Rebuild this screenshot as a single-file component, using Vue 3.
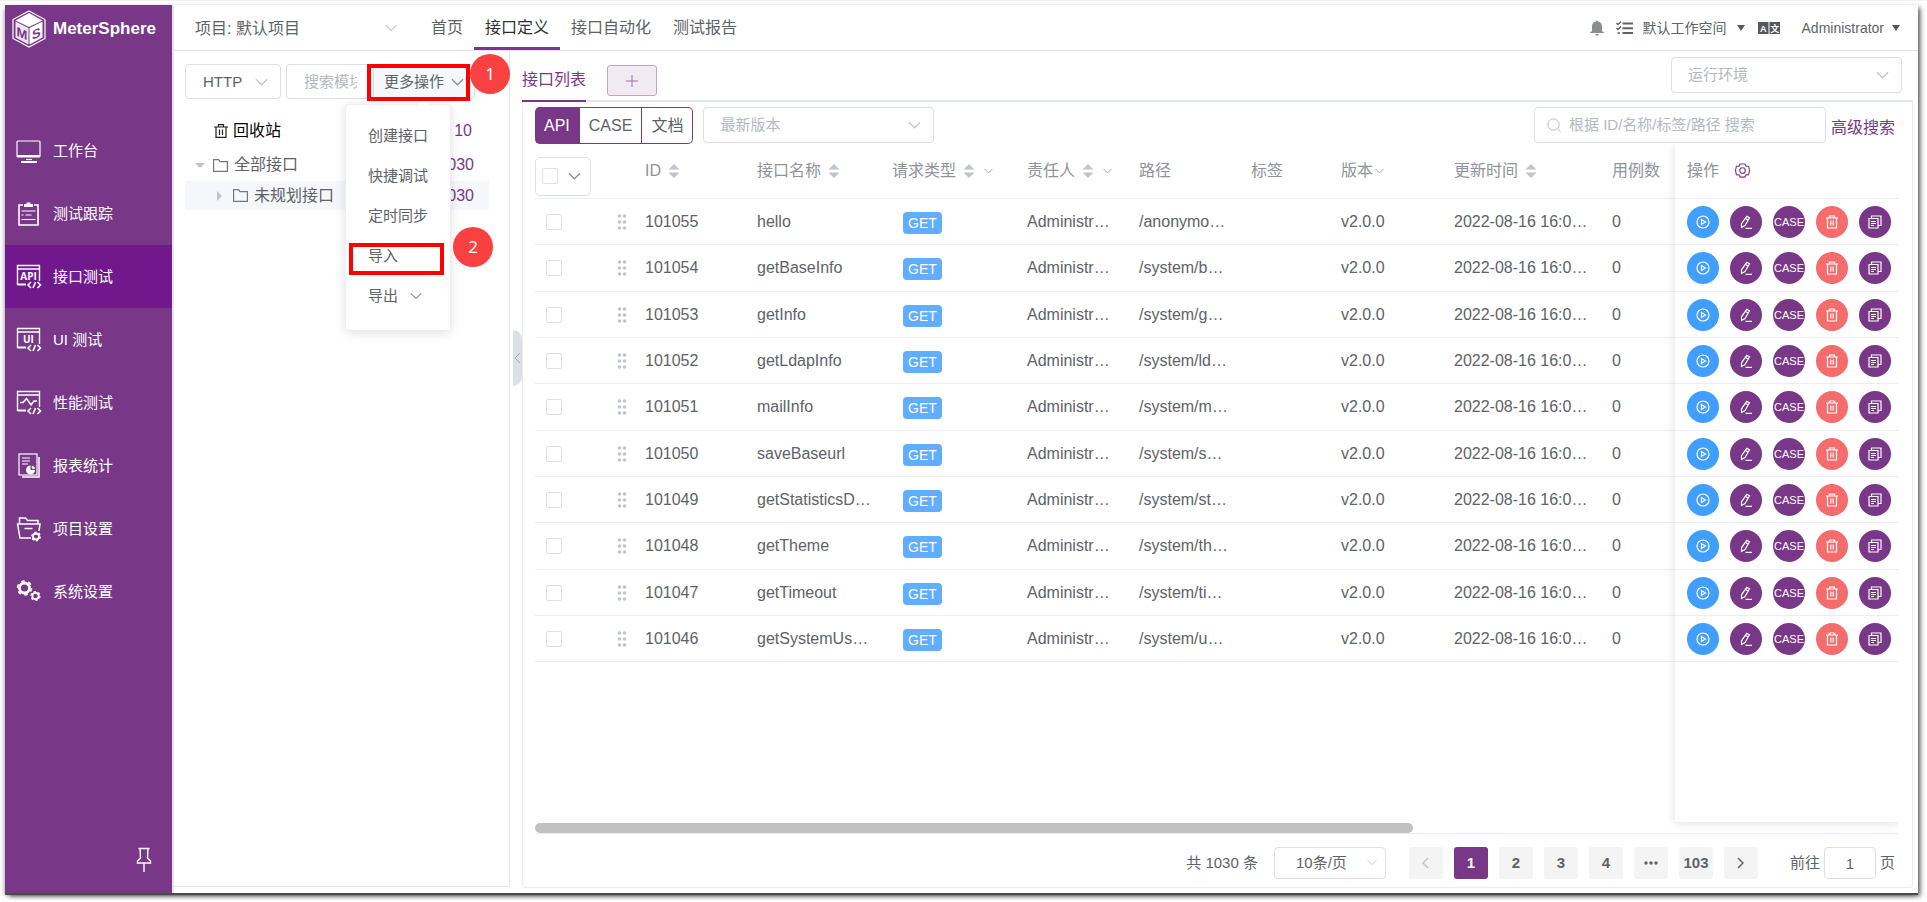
<script setup>
import { ref } from 'vue'

const menu = [
  { icon: 'desktop', label: '工作台' },
  { icon: 'clipboard', label: '测试跟踪' },
  { icon: 'api', label: '接口测试', active: true },
  { icon: 'ui', label: 'UI 测试' },
  { icon: 'perf', label: '性能测试' },
  { icon: 'report', label: '报表统计' },
  { icon: 'folder', label: '项目设置' },
  { icon: 'gears', label: '系统设置' },
]

const nav = [
  { label: '首页' },
  { label: '接口定义', active: true },
  { label: '接口自动化' },
  { label: '测试报告' },
]

const columns = [
  { key: 'id', label: 'ID', sort: true },
  { key: 'name', label: '接口名称', sort: true },
  { key: 'method', label: '请求类型', sort: true, filter: true },
  { key: 'owner', label: '责任人', sort: true, filter: true },
  { key: 'path', label: '路径' },
  { key: 'tags', label: '标签' },
  { key: 'version', label: '版本', filter: true, tight: true },
  { key: 'updated', label: '更新时间', sort: true },
  { key: 'cases', label: '用例数' },
]

const rows = [
  ['101055', 'hello', '/anonymo…'],
  ['101054', 'getBaseInfo', '/system/b…'],
  ['101053', 'getInfo', '/system/g…'],
  ['101052', 'getLdapInfo', '/system/ld…'],
  ['101051', 'mailInfo', '/system/m…'],
  ['101050', 'saveBaseurl', '/system/s…'],
  ['101049', 'getStatisticsD…', '/system/st…'],
  ['101048', 'getTheme', '/system/th…'],
  ['101047', 'getTimeout', '/system/ti…'],
  ['101046', 'getSystemUs…', '/system/u…'],
].map(([id, name, path]) => ({
  id,
  name,
  path,
  owner: 'Administr…',
  version: 'v2.0.0',
  updated: '2022-08-16 16:0…',
  cases: '0',
}))

const view = ref('API')
const page = ref(1)
const pages = [1, 2, 3, 4]
</script>

<template>
  <div class="shell">
    <aside class="sidebar">
      <a class="brand" href="#">
        <svg class="logo" viewBox="0 0 34 38" width="34" height="38">
          <path d="M17 1 33 9.500V28.500L17 37 1 28.500V9.500Z" fill="none" stroke="#fff" stroke-width="1.200" />
          <path d="M17 3 30.500 10.500 17 17 3.500 10.500Z" fill="#fff" />
          <path d="M3.500 11.500 16.500 18V34.500L3.500 27.500Z" fill="#efe6f2" />
          <path d="M30.500 11.500 17.500 18V34.500L30.500 27.500Z" fill="#fff" />
          <text transform="matrix(1 .45 0 1 4.500 25.500)" class="cube-letter">M</text>
          <text transform="matrix(1 -.45 0 1 20 30)" class="cube-letter">S</text>
        </svg>
        <span>MeterSphere</span>
      </a>
      <nav class="menu">
        <a v-for="m in menu" :key="m.label" href="#" class="menu-item" :class="{ active: m.active }">
          <svg class="menu-icon" viewBox="0 0 26 26" width="26" height="26">
            <g v-if="m.icon === 'desktop'">
              <rect x="1" y="3" width="23" height="16" rx="1" />
              <path d="M1 18h23M5 24h16" stroke-width="2" /><path d="M10 21.500h6" />
            </g>
            <g v-else-if="m.icon === 'clipboard'">
              <path d="M7 4H3v20h19V4h-4" stroke-width="1.600" />
              <path class="solid" d="M8 6V3h2.500V1.500h4V3H17v3Z" />
              <path d="M5.500 10h14M5.500 14h2M9.500 14h6M5.500 18.500h14" />
            </g>
            <g v-else-if="m.icon === 'report'">
              <rect x="3" y="1" width="18" height="21" />
              <path d="M23 4v20H6" stroke-width="1.500" />
              <path d="M6 5h8M6 8h8M6 11h6" />
              <path class="solid" d="M14.500 12.500V17h4.500a4.500 4.500 0 1 1-4.500-4.500Z" />
              <path class="solid" d="M15.800 12.500a4 4 0 0 1 3.400 3.300h-3.400Z" />
            </g>
            <g v-else-if="m.icon === 'folder'">
              <path d="M3.500 8V2h6l2 2.500h10.500V8M15 22H4L1.500 8H24l-1 7" stroke-width="1.500" />
              <path d="M8.500 12.500h8" stroke-width="1.500" />
              <circle cx="20" cy="20.500" r="3" stroke-width="1.800" />
              <circle cx="20" cy="20.500" r="4.200" stroke-width="1.400" stroke-dasharray="2.200 2.200" />
            </g>
            <g v-else-if="m.icon === 'gears'">
              <circle cx="8.500" cy="9" r="5" stroke-width="2.800" />
              <circle cx="8.500" cy="9" r="7" stroke-width="1.600" stroke-dasharray="3.700 3.630" />
              <circle cx="19.500" cy="17" r="3.200" stroke-width="1.800" />
              <circle cx="19.500" cy="17" r="4.500" stroke-width="1.200" stroke-dasharray="2.350 2.350" />
            </g>
            <g v-else>
              <path d="M1.500 21V1.500h22V17M1.500 5h22" stroke-width="1.400" />
              <path d="M1.500 20.500h8.500" stroke-width="2" />
              <path d="m15 18-3 3 3 3M21.500 18l3 3-3 3M19.500 18l-2.500 6" stroke-width="1.600" />
              <path v-if="m.icon === 'perf'" d="M4 12.500h3l3.500-4L15 15l3-4h3" stroke-width="1.600" />
              <text v-else x="12.500" y="16" text-anchor="middle">{{ m.icon === 'api' ? 'API' : 'UI' }}</text>
            </g>
          </svg>
          <span>{{ m.label }}</span>
        </a>
      </nav>
      <button class="pin" type="button" aria-label="固定菜单">
        <svg viewBox="0 0 16 26" width="16" height="26">
          <path d="M2.500 1.500h11M4 1.500 4.500 11 1.500 14v2h13v-2l-3-3L12 1.500M8 16v9" fill="none" stroke="#fff" stroke-width="1.400" />
        </svg>
      </button>
    </aside>

    <div class="main">
      <header class="topbar">
        <div class="select project">
          <select aria-label="项目"><option>项目: 默认项目</option></select>
          <svg class="chev" viewBox="0 0 14 8" width="12" height="8"><path d="m1 1 6 6 6-6" /></svg>
        </div>
        <nav class="topnav">
          <a v-for="n in nav" :key="n.label" href="#" :class="{ active: n.active }">{{ n.label }}</a>
        </nav>
        <div class="user-tools">
          <button type="button" aria-label="通知">
            <svg viewBox="0 0 14 16" width="14" height="16"><path d="M6 1.500a1 1 0 0 1 2 0c3 .5 4 2.500 4 5V11l2 1.500v.5H0v-.5L2 11V6.500c0-2.500 1-4.500 4-5ZM5 14h4c0 2-4 2-4 0Z" fill="#8b8d92" /></svg>
          </button>
          <button type="button" aria-label="任务" class="tasks">
            <svg viewBox="0 0 17 14" width="17" height="14" fill="none" stroke="#606266" stroke-width="2">
              <path d="M6.500 2.500H17M6.500 7.200H17M6.500 12H17" /><path d="m.5 2 1.500 1.500L5 .5M.5 7l1.500 1.500L5 5.500M1.500 12h2.500" stroke-width="1.400" />
            </svg>
          </button>
          <button type="button" class="workspace">默认工作空间<i class="caret"></i></button>
          <button type="button" aria-label="语言" class="lang">
            <svg viewBox="0 0 22 12" width="22" height="12">
              <path d="M0 0h10.500v12H0ZM11.500 0H22v12H11.500Z" fill="#55585d" />
              <text x="5.200" y="10" text-anchor="middle" class="lang-a">A</text>
              <text x="16.800" y="9.500" text-anchor="middle" class="lang-a">文</text>
            </svg>
          </button>
          <button type="button" class="account">Administrator<i class="caret"></i></button>
        </div>
      </header>

      <div class="content">
        <section class="modules">
          <div class="module-tools">
            <div class="select protocol">
              <select aria-label="协议"><option>HTTP</option></select>
              <svg class="chev" viewBox="0 0 14 8" width="13" height="8"><path d="m1 1 6 6 6-6" /></svg>
            </div>
            <input class="module-search" type="text" placeholder="搜索模块" aria-label="搜索模块" />
            <div class="more">
              <button class="more-btn" type="button">更多操作
                <svg class="chev dark" viewBox="0 0 14 8" width="13" height="8"><path d="m1 1 6 6 6-6" /></svg>
              </button>
              <span class="mark mark-more"></span>
              <span class="step step-one">1</span>
              <ul class="dropdown">
                <li><button type="button">创建接口</button></li>
                <li><button type="button">快捷调试</button></li>
                <li><button type="button">定时同步</button></li>
                <li>
                  <button type="button">导入</button>
                  <span class="mark mark-import"></span>
                  <span class="step step-two">2</span>
                </li>
                <li>
                  <button type="button">导出
                    <svg class="chev dark" viewBox="0 0 14 8" width="12" height="8"><path d="m1 1 6 6 6-6" /></svg>
                  </button>
                </li>
              </ul>
            </div>
          </div>
          <div class="tree">
            <a class="node recycle" href="#">
              <svg viewBox="0 0 14 14" width="14" height="14" class="line-icon black"><path d="M0 3h14M4.500 3V.7h5V3M2 3v10.300h10V3M5.500 5.500v5.500M8.500 5.500v5.500" /></svg>
              <span class="label">回收站</span><span class="count">10</span>
            </a>
            <a class="node root" href="#">
              <i class="tri down"></i>
              <svg viewBox="0 0 15 13" width="15" height="13" class="line-icon"><path d="M.6 12.400V.6h5L7 2.600h7.400v9.800Z" /></svg>
              <span class="label">全部接口</span><span class="count">1030</span>
            </a>
            <a class="node child" href="#">
              <i class="tri right"></i>
              <svg viewBox="0 0 15 13" width="15" height="13" class="line-icon"><path d="M.6 12.400V.6h5L7 2.600h7.400v9.800Z" /></svg>
              <span class="label">未规划接口</span><span class="count">1030</span>
            </a>
          </div>
          <button class="collapse" type="button" aria-label="收起">
            <svg viewBox="0 0 7 12" width="7" height="12"><path d="M6 1 1 6l5 5" fill="none" stroke="#a9adb3" stroke-width="1" /></svg>
          </button>
        </section>

        <section class="workarea">
          <div class="tabs">
            <a class="tab" href="#">接口列表</a>
            <button class="add" type="button" aria-label="新增标签">
              <svg viewBox="0 0 12 12" width="12" height="12"><path d="M6 0v12M0 6h12" stroke="#9a75a6" /></svg>
            </button>
            <div class="select env">
              <select aria-label="运行环境" class="empty"><option>运行环境</option></select>
              <svg class="chev" viewBox="0 0 14 8" width="13" height="8"><path d="m1 1 6 6 6-6" /></svg>
            </div>
          </div>
          <div class="panel">
            <div class="toolbar">
              <div class="switch">
                <button v-for="v in ['API', 'CASE', '文档']" :key="v" type="button" :class="{ on: view === v }" @click="view = v">{{ v }}</button>
              </div>
              <div class="select version">
                <select aria-label="版本" class="empty"><option>最新版本</option></select>
                <svg class="chev" viewBox="0 0 14 8" width="13" height="8"><path d="m1 1 6 6 6-6" /></svg>
              </div>
              <label class="search">
                <svg viewBox="0 0 15 15" width="14" height="14" fill="none" stroke="#b4b8bf"><circle cx="7" cy="7" r="6" /><path d="m11.500 11.500 3 3" /></svg>
                <input type="text" placeholder="根据 ID/名称/标签/路径 搜索" aria-label="搜索" />
              </label>
              <a class="advanced" href="#">高级搜索</a>
            </div>

            <div class="grid">
              <table class="list">
                <colgroup>
                  <col class="c-check" /><col class="c-drag" /><col v-for="c in columns" :key="c.key" :class="'c-' + c.key" />
                </colgroup>
                <thead>
                  <tr>
                    <th class="check">
                      <span class="check-all">
                        <input type="checkbox" aria-label="全选" />
                        <svg class="chev dark" viewBox="0 0 14 8" width="13" height="8"><path d="m1 1 6 6 6-6" /></svg>
                      </span>
                    </th>
                    <th></th>
                    <th v-for="c in columns" :key="c.key">
                      <span class="head" :class="{ tight: c.tight }">{{ c.label }}
                        <svg v-if="c.sort" class="sort" viewBox="0 0 12 16" width="12" height="16"><path d="M.5 6.500 6 1l5.500 5.500ZM.5 9.500h11L6 15Z" /></svg>
                        <svg v-if="c.filter" class="chev" viewBox="0 0 14 8" width="9" height="6"><path d="m1 1 6 6 6-6" /></svg>
                      </span>
                    </th>
                  </tr>
                </thead>
                <tbody>
                  <tr v-for="r in rows" :key="r.id">
                    <td class="check"><input type="checkbox" :aria-label="r.id" /></td>
                    <td class="drag">
                      <svg viewBox="0 0 10 16" width="10" height="16" fill="#c0c4cc"><circle v-for="n in 6" :key="n" :cx="n % 2 ? 2.5 : 7.5" :cy="Math.ceil(n / 2) * 6 - 4" r="1.800" /></svg>
                    </td>
                    <td v-for="c in columns" :key="c.key">
                      <span v-if="c.key === 'method'" class="tag">GET</span>
                      <template v-else>{{ r[c.key] }}</template>
                    </td>
                  </tr>
                </tbody>
              </table>
              <div class="fixed">
                <table>
                  <thead>
                    <tr>
                      <th>
                        <span class="head ops-head">操作
                          <svg viewBox="0 0 16 16" width="15" height="15" fill="none" stroke="#783887" stroke-width="1.200">
                            <path d="M5.500 1h5l1.300 2.300 2.700.2L15.500 8l-1 4.500-2.700.2-1.300 2.300h-5l-1.300-2.300-2.700-.2L.5 8l1-4.500 2.700-.2Z" /><circle cx="8" cy="8" r="3" />
                          </svg>
                        </span>
                      </th>
                    </tr>
                  </thead>
                  <tbody>
                    <tr v-for="r in rows" :key="r.id">
                      <td>
                        <div class="ops">
                          <button type="button" class="blue" aria-label="运行">
                            <svg viewBox="0 0 14 14" width="14" height="14"><circle cx="7" cy="7" r="6" /><path d="M5.500 4.500v5L9.500 7Z" /></svg>
                          </button>
                          <button type="button" aria-label="编辑">
                            <svg viewBox="0 0 14 14" width="14" height="14"><path d="M7.800 1.200 10.500 2.800 6 10.500 2.500 12.500V8.800ZM6.500 3.500l2.700 1.600M6.500 13.300H13" /></svg>
                          </button>
                          <button type="button">CASE</button>
                          <button type="button" class="red" aria-label="删除">
                            <svg viewBox="0 0 14 14" width="14" height="14"><path d="M1 3h12M4.500 3V1h5v2M2.500 3v10h9V3M5.800 5.500v5M8.200 5.500v5" /></svg>
                          </button>
                          <button type="button" aria-label="复制">
                            <svg viewBox="0 0 14 14" width="14" height="14"><path d="M1 3.500h9V13H1ZM3.500 3.500V1H13v9.500h-3M3 6.500h5M3 8.500h5M3 10.500h3" /></svg>
                          </button>
                        </div>
                      </td>
                    </tr>
                  </tbody>
                </table>
              </div>
            </div>
            <div class="scroll"><div class="thumb"></div></div>

            <div class="pager">
              <span>共 1030 条</span>
              <div class="select size">
                <select aria-label="每页条数"><option>10条/页</option></select>
                <svg class="chev" viewBox="0 0 14 8" width="10" height="7"><path d="m1 1 6 6 6-6" /></svg>
              </div>
              <div class="pages">
                <button type="button" aria-label="上一页"><svg viewBox="0 0 7 12" width="7" height="12"><path d="M6 1 1 6l5 5" fill="none" stroke="#c0c4cc" stroke-width="1.500" /></svg></button>
                <button v-for="p in pages" :key="p" type="button" :class="{ on: page === p }" @click="page = p">{{ p }}</button>
                <button type="button" aria-label="更多"><svg viewBox="0 0 14 4" width="14" height="4" fill="#606266"><circle cx="2" cy="2" r="1.700" /><circle cx="7" cy="2" r="1.700" /><circle cx="12" cy="2" r="1.700" /></svg></button>
                <button type="button">103</button>
                <button type="button" aria-label="下一页"><svg viewBox="0 0 7 12" width="7" height="12"><path d="m1 1 5 5-5 5" fill="none" stroke="#606266" stroke-width="1.500" /></svg></button>
              </div>
              <label class="jump">前往<input type="text" value="1" />页</label>
            </div>
          </div>
        </section>
      </div>
    </div>
  </div>
</template>

<style>
body {
  background: #fff;
  border-top: 1px solid #f0f0f0;
}
</style>

<style scoped>
.shell,
.shell * {
  box-sizing: border-box;
}
.shell {
  display: flex;
  min-height: calc(100vh - 12px);
  margin: 4px 9px 7px 5px;
  border-bottom: 2px solid #4a4a4a;
  box-shadow: 3px 2px 5px -1px rgba(0, 0, 0, 0.7), -3px 2px 4px -2px rgba(0, 0, 0, 0.3);
  background: #fff;
  color: #606266;
  font: 16px/24px "Liberation Sans", "Noto Sans CJK SC", sans-serif;
}
a {
  color: inherit;
  text-decoration: none;
}
button,
input,
select {
  font: inherit;
  color: inherit;
}
button {
  padding: 0;
  border: 0;
  background: none;
  cursor: pointer;
}
svg {
  display: block;
  flex: none;
}
.chev {
  fill: none;
  stroke: #c0c4cc;
  stroke-width: 1.3;
}
.chev.dark {
  stroke: #8a8d93;
}

.sidebar {
  display: flex;
  flex-direction: column;
  flex: none;
  width: 167px;
  background: #783887;
  color: #fff;
}
.brand {
  display: flex;
  align-items: center;
  gap: 7px;
  height: 48px;
  padding-left: 7px;
  font-size: 17px;
  font-weight: 700;
}
.cube-letter {
  fill: #783887;
  font: 700 13px "Liberation Sans", sans-serif;
}
.menu {
  margin-top: 66px;
}
.menu-item {
  display: flex;
  align-items: center;
  gap: 11px;
  height: 63px;
  padding-left: 11px;
  font-size: 15px;
}
.menu-item.active {
  background: #71198c;
}
.menu-icon {
  fill: none;
  stroke: #fff;
  stroke-width: 1.2;
}
.menu-icon .solid {
  fill: #fff;
  stroke: none;
}
.menu-icon text {
  fill: #fff;
  stroke: none;
  font: 700 10px "Open Sans", sans-serif;
}
.pin {
  align-self: flex-end;
  margin: auto 20px 20px 0;
}

.main {
  display: flex;
  flex-direction: column;
  flex: 1;
  min-width: 0;
  border-left: 2px solid #e6e6ea;
}
.topbar {
  display: flex;
  align-items: stretch;
  height: 46px;
  border-bottom: 1px solid #e2e2e4;
}
.select {
  position: relative;
  display: flex;
}
.select select {
  width: 100%;
  appearance: none;
  border: 1px solid #dcdfe6;
  border-radius: 4px;
  background: #fff;
  padding: 0 16px;
  font-size: 15px;
}
.select select.empty {
  color: #b4b8c0;
}
.select .chev {
  position: absolute;
  right: 13px;
  top: 50%;
  margin-top: -4px;
  pointer-events: none;
}
.project {
  width: 235px;
}
.project select {
  border: 0;
  padding: 2px 21px 0;
  font-size: 16px;
}
.project .chev {
  right: 12px;
}
.topnav {
  display: flex;
}
.topnav a {
  padding: 11px 11px 0;
  border-bottom: 3px solid transparent;
}
.topnav a:first-child {
  margin-left: 11px;
}
.topnav a.active {
  color: #303133;
  border-color: #783887;
}
.user-tools {
  display: flex;
  align-items: center;
  margin-left: auto;
  padding: 0 18px 0 0;
  font-size: 14px;
}
.tasks {
  margin: 0 10px 0 12px;
}
.workspace,
.account {
  display: flex;
  align-items: center;
  gap: 10px;
}
.lang {
  margin: 0 22px 0 13px;
}
.account {
  gap: 8px;
}
.lang-a {
  fill: #fff;
  font: 700 9px "Liberation Sans", "Noto Sans CJK SC", sans-serif;
}
.caret {
  border: 4px solid transparent;
  border-top: 6px solid #55585d;
  border-bottom: 0;
}

.content {
  display: flex;
  flex: 1;
}
.modules {
  position: relative;
  flex: none;
  width: 336px;
  margin-bottom: 6px;
  border: solid #e6e6e8;
  border-width: 0 1px 1px 0;
}
.module-tools {
  display: flex;
  height: 48px;
  padding: 13px 0 0 11px;
}
.protocol {
  width: 96px;
  margin-right: 5px;
}
.protocol select {
  padding: 0 17px;
}
.module-search {
  width: 87px;
  min-width: 0;
  padding: 0 16px 0 17px;
  border: 1px solid #dcdfe6;
  border-right: 0;
  border-radius: 4px 0 0 4px;
  font-size: 15px;
}
::placeholder {
  color: #b4b8c0;
  opacity: 1;
}
.more {
  position: relative;
}
.more-btn {
  display: flex;
  align-items: center;
  gap: 7px;
  width: 102px;
  height: 35px;
  padding-left: 10px;
  border: 1px solid #dcdfe6;
  border-radius: 0 4px 4px 0;
  background: #f5f7fa;
  font-size: 15px;
}
.mark {
  position: absolute;
  z-index: 3;
  border: 4px solid #fe0000;
  pointer-events: none;
}
.mark-more {
  left: -6px;
  top: 0;
  width: 103px;
  height: 37px;
}
.step {
  position: absolute;
  z-index: 3;
  width: 40px;
  border-radius: 50%;
  background: #fa4141;
  color: #fff;
  font: 17px/40px "Noto Sans", sans-serif;
  text-align: center;
}
.step-one {
  left: 97px;
  top: -10px;
}
.dropdown {
  position: absolute;
  z-index: 2;
  left: -28px;
  top: 40px;
  width: 106px;
  margin: 0;
  padding: 11px 0 14px;
  border: 1px solid #ebeef5;
  border-radius: 4px;
  background: #fff;
  box-shadow: 0 2px 12px rgba(0, 0, 0, 0.12);
  list-style: none;
}
.dropdown::before {
  content: "";
  position: absolute;
  left: 73px;
  top: -5px;
  width: 9px;
  height: 9px;
  background: #fff;
  transform: rotate(45deg);
}
.dropdown li {
  position: relative;
}
.dropdown button {
  display: flex;
  align-items: center;
  gap: 12px;
  width: 100%;
  height: 40px;
  padding-left: 22px;
  font-size: 15px;
}
.mark-import {
  left: 3px;
  top: 7px;
  width: 95px;
  height: 32px;
}
.step-two {
  left: 107px;
  top: -9px;
}
.tree {
  padding: 14px 20px 0 11px;
}
.node {
  display: flex;
  align-items: center;
  height: 29px;
}
.node .label {
  margin-left: 6px;
}
.node .count {
  margin-left: auto;
  padding-right: 15px;
  color: #783887;
}
.node.recycle {
  height: 36px;
  padding-left: 29px;
  color: #000;
}
.recycle .label {
  margin-left: 5px;
}
.recycle .count {
  padding-right: 17px;
}
.node.root {
  height: 32px;
  padding-left: 10px;
}
.child {
  padding-left: 32px;
  background: #f5f7fa;
}
.line-icon {
  fill: none;
  stroke: #75777c;
  stroke-width: 1.2;
}
.line-icon.black {
  stroke: #222;
}
.tri {
  border: 5px solid transparent;
}
.tri.down {
  border-top-color: #c0c4cc;
  margin: 5px 8px 0 0;
}
.tri.right {
  border-left-color: #c0c4cc;
  margin-right: 6px;
}
.collapse {
  position: absolute;
  left: 339px;
  top: 279px;
  width: 9px;
  height: 56px;
  padding-left: 1px;
  border-radius: 0 9px 9px 0;
  background: #dcdfe3;
}

.workarea {
  display: flex;
  flex-direction: column;
  flex: 1;
  min-width: 0;
  margin: 0 5px 5px 12px;
}
.tabs {
  display: flex;
  align-items: center;
  height: 51px;
  border-bottom: 2px solid #e4e7ed;
}
.tab {
  align-self: stretch;
  margin-bottom: -2px;
  padding-top: 17px;
  border-bottom: 2px solid #783887;
  color: #783887;
}
.add {
  display: grid;
  place-items: center;
  width: 50px;
  height: 31px;
  margin: 10px 0 0 21px;
  border: 1px solid #c2a4ca;
  border-radius: 3px;
  background: #f1eaf3;
}
.env {
  width: 231px;
  height: 36px;
  margin: 0 11px 2px auto;
}
.panel {
  display: flex;
  flex-direction: column;
  flex: 1;
  padding: 5px 13px 8px 12px;
  border: 1px solid #ebecf3;
  border-top: 0;
  border-radius: 0 0 4px 4px;
}
.toolbar {
  display: flex;
  height: 37px;
}
.switch {
  display: flex;
  margin-right: 10px;
}
.switch button {
  padding: 0 9px;
  border: 1px solid #783887;
  border-left-width: 0;
}
.switch button:first-child {
  border-radius: 5px 0 0 5px;
}
.switch button:last-child {
  border-radius: 0 5px 5px 0;
}
.switch .on {
  background: #783887;
  color: #fff;
}
.version {
  width: 231px;
  height: 36px;
}
.search {
  display: flex;
  align-items: center;
  gap: 8px;
  width: 292px;
  height: 36px;
  margin-left: auto;
  padding-left: 12px;
  border: 1px solid #dcdfe6;
  border-radius: 4px;
  font-size: 15px;
}
.search input {
  width: 100%;
  border: 0;
  padding: 0;
  outline: 0;
  background: none;
}
.advanced {
  padding: 9px 4px 0 5px;
  color: #783887;
}

.grid {
  display: flex;
  flex: 1;
  margin-top: 1px;
}
.grid table {
  width: 100%;
  border-collapse: separate;
  border-spacing: 0;
  table-layout: fixed;
}
.grid .list {
  flex: 1;
  align-self: flex-start;
  min-width: 0;
}
.c-check { width: 74px; }
.c-drag { width: 24px; }
.c-id, .c-owner, .c-path { width: 112px; }
.c-name, .c-method { width: 135px; }
.c-tags { width: 90px; }
.c-version { width: 113px; }
.c-updated { width: 158px; }
.grid th,
.grid td {
  padding: 0 0 0 12px;
  border-bottom: 1px solid #ebeef5;
  text-align: left;
  white-space: nowrap;
}
.grid th {
  height: 54px;
  padding-bottom: 2px;
  color: #909399;
  font-weight: 400;
}
.grid td {
  height: 46px;
}
.grid tbody tr:nth-child(3n + 2) td {
  height: 47px;
}
.grid .check {
  padding-left: 11px;
}
.grid th.check {
  padding: 9px 0 0;
}
.grid .drag {
  padding-left: 8px;
}
input[type="checkbox"] {
  display: block;
  appearance: none;
  width: 16px;
  height: 16px;
  margin: 0;
  border: 1px solid #dcdfe6;
  border-radius: 2px;
  background: #fff;
}
.check-all {
  display: flex;
  align-items: center;
  gap: 10px;
  width: 56px;
  height: 39px;
  padding-left: 6px;
  border: 1px solid #dcdfe6;
  border-radius: 5px;
}
.head {
  display: flex;
  align-items: center;
  gap: 7px;
}
.head.tight {
  gap: 0;
}
.head .chev {
  margin-left: 2px;
  stroke: #909399;
}
.sort {
  fill: #c0c4cc;
}
.tag {
  display: block;
  width: 39px;
  margin: 2px 0 0 11px;
  border-radius: 4px;
  background: #61adff;
  color: #fff;
  font-size: 14px;
  line-height: 22px;
  text-align: center;
}
.fixed {
  flex: none;
  width: 224px;
  border-bottom: 1px solid #ebeef5;
  box-shadow: 0 0 10px rgba(0, 0, 0, 0.12);
  clip-path: inset(0 0 -10px -12px);
}
.ops-head {
  gap: 16px;
}
.ops {
  display: flex;
  gap: 11px;
}
.ops button {
  display: grid;
  place-items: center;
  width: 32px;
  height: 32px;
  border-radius: 50%;
  background: #783887;
  color: #fff;
  font-size: 11px;
}
.ops .blue {
  background: #409eff;
}
.ops .red {
  background: #f56c6c;
}
.ops svg {
  fill: none;
  stroke: #fff;
  stroke-width: 1.2;
}
.scroll {
  height: 11px;
  border-bottom: 1px solid #ebecf3;
}
.thumb {
  width: 64.4%;
  height: 10px;
  border-radius: 5px;
  background: #c1c1c1;
}
.pager {
  display: flex;
  align-items: center;
  justify-content: flex-end;
  height: 32px;
  margin-top: 13px;
  padding-right: 4px;
  font-size: 15px;
}
.size {
  width: 112px;
  height: 32px;
  margin: 0 23px 0 16px;
}
.size select {
  padding: 0 21px;
}
.size .chev {
  right: 9px;
}
.pages {
  display: flex;
  gap: 11px;
}
.pages button {
  display: grid;
  place-items: center;
  width: 34px;
  height: 32px;
  border-radius: 3px;
  background: #f4f4f5;
  font-weight: 700;
}
.pages .on {
  background: #783887;
  color: #fff;
}
.jump {
  display: flex;
  align-items: center;
  gap: 4px;
  margin-left: 32px;
}
.jump input {
  width: 52px;
  height: 32px;
  padding: 0;
  border: 1px solid #dcdfe6;
  border-radius: 4px;
  text-align: center;
}
</style>
